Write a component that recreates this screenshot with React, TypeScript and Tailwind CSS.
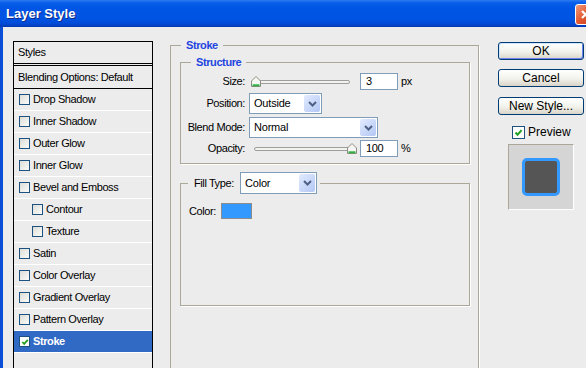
import React from "react"

const styleRows = [
    { label: "Drop Shadow" },
    { label: "Inner Shadow" },
    { label: "Outer Glow" },
    { label: "Inner Glow" },
    { label: "Bevel and Emboss" },
    { label: "Contour", sub: true },
    { label: "Texture", sub: true },
    { label: "Satin" },
    { label: "Color Overlay" },
    { label: "Gradient Overlay" },
    { label: "Pattern Overlay" },
    { label: "Stroke", checked: true, active: true },
]

function CheckBox({ checked, big }: { checked?: boolean; big?: boolean }) {
    return (
        <span
            className={
                (big ? "w-[13px] h-[13px] " : "w-[11px] h-[11px] ") +
                "shrink-0 flex items-center justify-center border border-[#1c5180] " +
                (checked ? "bg-white" : "bg-[linear-gradient(135deg,#dcdcd7,#fbfbf9)]")
            }
        >
            {checked && (
                <svg width={big ? 9 : 8} height={big ? 9 : 8} viewBox="0 0 9 9">
                    <path d="M1.5 4.5 L3.6 6.7 L7.6 2.2" fill="none" stroke="#21a121" strokeWidth="2" />
                </svg>
            )}
        </span>
    )
}

function Chevron() {
    return (
        <svg width="9" height="6" viewBox="0 0 9 6">
            <path d="M1 1 L4.5 4.5 L8 1" fill="none" stroke="#4d6185" strokeWidth="2" />
        </svg>
    )
}

function Select({ value, width, tall }: { value: string; width: string; tall?: boolean }) {
    return (
        <div className={width + (tall ? " h-[22px]" : " h-[21px]") + " shrink-0 flex items-center border border-[#7f9db9] bg-white p-[1px]"}>
            <span className="flex-1 pl-[3px] text-[11px] tracking-[-0.2px] text-black">{value}</span>
            <span className="w-[16px] h-full flex items-center justify-center rounded-[2px] bg-[linear-gradient(135deg,#e2ebfe,#b3c7f5)]">
                <Chevron />
            </span>
        </div>
    )
}

function Thumb() {
    return (
        <svg width="10" height="11" viewBox="0 0 10 11">
            <path d="M0.5 5 L5 0.5 L9.5 5 V10.5 H0.5 Z" fill="#f6f6f2" stroke="#8c8c85" />
            <path d="M1.5 9.3 H8.5" stroke="#2fb141" strokeWidth="2" />
        </svg>
    )
}

function Slider({ pos }: { pos: "left" | "right" }) {
    return (
        <div className="relative ml-[4px] w-[107px] h-full flex items-center">
            <div className="ml-[5px] w-[96px] h-[4px] rounded-full border border-[#9d9d9d] bg-[#f3f3ee]" />
            <div className={"absolute top-[3px] " + (pos === "left" ? "left-[2px]" : "left-[98px]")}>
                <Thumb />
            </div>
        </div>
    )
}

function NumInput({ value }: { value: string }) {
    return (
        <div className="ml-[4px] w-[38px] h-[17px] flex items-center border border-[#7f9db9] bg-white pl-[5px] text-[11px] text-black">
            {value}
        </div>
    )
}

function Label({ children }: { children: React.ReactNode }) {
    return <span className="w-[54px] shrink-0 flex justify-end whitespace-nowrap">{children}</span>
}

function XpButton({ children, isDefault }: { children: React.ReactNode; isDefault?: boolean }) {
    return (
        <button
            className={
                "w-[86px] h-[18px] flex items-center justify-center rounded-[3px] border border-[#003c74] text-[12px] leading-none text-black " +
                "bg-[linear-gradient(180deg,#ffffff,#f2f2ec_55%,#d9d4c8)] " +
                (isDefault ? "shadow-[inset_1px_1px_0_#cee7ff,inset_-1px_-1px_0_#6982ee]" : "")
            }
        >
            {children}
        </button>
    )
}

export default function App() {
    return (
        <div className="w-[586px] h-[368px] overflow-hidden flex flex-col bg-[#ececec] font-['Liberation_Sans',Arial,sans-serif] text-black">
            {/* title bar */}
            <div className="h-[27px] shrink-0 flex items-center pl-[6px] bg-[linear-gradient(180deg,#2d7cf2_0%,#0a5eea_10%,#0055e5_30%,#0054e3_70%,#004ad6_88%,#0038b0_100%)]">
                <span className="text-[13px] font-bold text-white [text-shadow:1px_1px_0_#0f2b8a]">Layer Style</span>
                <span className="ml-auto -mr-[10px] mt-[1px] w-[21px] h-[21px] shrink-0 flex items-center justify-center rounded-[3px] border border-white bg-[linear-gradient(135deg,#f29a7c,#e35a30_50%,#c43a1a)]">
                    <svg width="11" height="11" viewBox="0 0 11 11">
                        <path d="M2 2 L9 9 M9 2 L2 9" stroke="#fff" strokeWidth="2.2" />
                    </svg>
                </span>
            </div>

            {/* body */}
            <div className="flex-1 flex items-start border-l-[3px] border-[#0a4fd6] pl-[10px] pt-[14px]">
                {/* styles list */}
                <div className="w-[140px] h-[340px] shrink-0 border border-black text-[11px] tracking-[-0.4px]">
                    <div className="h-[24px] flex items-center pl-[4px] border-b-[3px] border-double border-black">Styles</div>
                    <div className="h-[23px] flex items-center pl-[4px] border-b border-black">Blending Options: Default</div>
                    {styleRows.map((row) => (
                        <div
                            key={row.label}
                            className={
                                "h-[22px] flex items-center gap-[3px] border-b border-white " +
                                (row.sub ? "pl-[18px] " : "pl-[5px] ") +
                                (row.active ? "bg-[#316ac5] text-white font-bold" : "")
                            }
                        >
                            <CheckBox checked={row.checked} />
                            <span>{row.label}</span>
                        </div>
                    ))}
                </div>

                {/* stroke settings */}
                <div className="ml-[17px] -mt-[2px] w-[309px] shrink-0 text-[11px] tracking-[-0.4px]">
                    <fieldset className="h-[340px] border border-[#aca899] pl-[9px] pr-[8px] shadow-[1px_1px_0_#fff]">
                        <legend className="ml-[1px] px-[5px] leading-[12px] font-bold text-[#1f45e0]">Stroke</legend>

                        <fieldset className="mt-[5px] border border-[#aca899] pl-[10px] pb-[6px] shadow-[1px_1px_0_#fff]">
                            <legend className="px-[5px] leading-[12px] font-bold text-[#1f45e0]">Structure</legend>
                            <div className="pt-[5px] flex flex-col">
                                <div className="h-[17px] flex items-center">
                                    <Label>Size:</Label>
                                    <Slider pos="left" />
                                    <NumInput value="3" />
                                    <span className="ml-[3px]">px</span>
                                </div>
                                <div className="mt-[3px] h-[21px] flex items-center">
                                    <Label>Position:</Label>
                                    <span className="ml-[4px]">
                                        <Select value="Outside" width="w-[73px]" />
                                    </span>
                                </div>
                                <div className="mt-[3px] h-[21px] flex items-center">
                                    <Label>Blend Mode:</Label>
                                    <span className="ml-[4px]">
                                        <Select value="Normal" width="w-[129px]" />
                                    </span>
                                </div>
                                <div className="mt-[2px] h-[17px] flex items-center">
                                    <Label>Opacity:</Label>
                                    <Slider pos="right" />
                                    <NumInput value="100" />
                                    <span className="ml-[3px]">%</span>
                                </div>
                            </div>
                        </fieldset>

                        <fieldset className="mt-[8px] h-[134px] border border-[#aca899] pl-[7px] shadow-[1px_1px_0_#fff]">
                            <legend className="pl-[6px] pr-[3px]">
                                <div className="flex items-center">
                                    <span className="w-[46px]">Fill Type:</span>
                                    <Select value="Color" width="w-[77px]" tall />
                                </div>
                            </legend>
                            <div className="mt-[9px] ml-[1px] flex items-center">
                                <span className="w-[32px]">Color:</span>
                                <span className="w-[31px] h-[16px] border border-[#8c8c8c] bg-[#3399ff]" />
                            </div>
                        </fieldset>
                    </fieldset>
                </div>

                {/* buttons */}
                <div className="ml-[19px] w-[88px] shrink-0 flex flex-col">
                    <div className="mt-[1px]">
                        <XpButton isDefault>OK</XpButton>
                    </div>
                    <div className="mt-[9px]">
                        <XpButton>Cancel</XpButton>
                    </div>
                    <div className="mt-[10px]">
                        <XpButton>New Style...</XpButton>
                    </div>
                    <div className="mt-[11px] h-[13px] pl-[14px] flex items-center gap-[3px] text-[12px] leading-[13px]">
                        <CheckBox checked big />
                        <span>Preview</span>
                    </div>
                    <div className="mt-[5px] ml-[10px] w-[66px] h-[66px] flex items-center justify-center border border-[#aca899] border-r-white border-b-white bg-[#d5d5d5]">
                        <div className="w-[38px] h-[38px] rounded-[5px] border-[3px] border-[#3399ff] bg-[#555555]" />
                    </div>
                </div>
            </div>
        </div>
    )
}
